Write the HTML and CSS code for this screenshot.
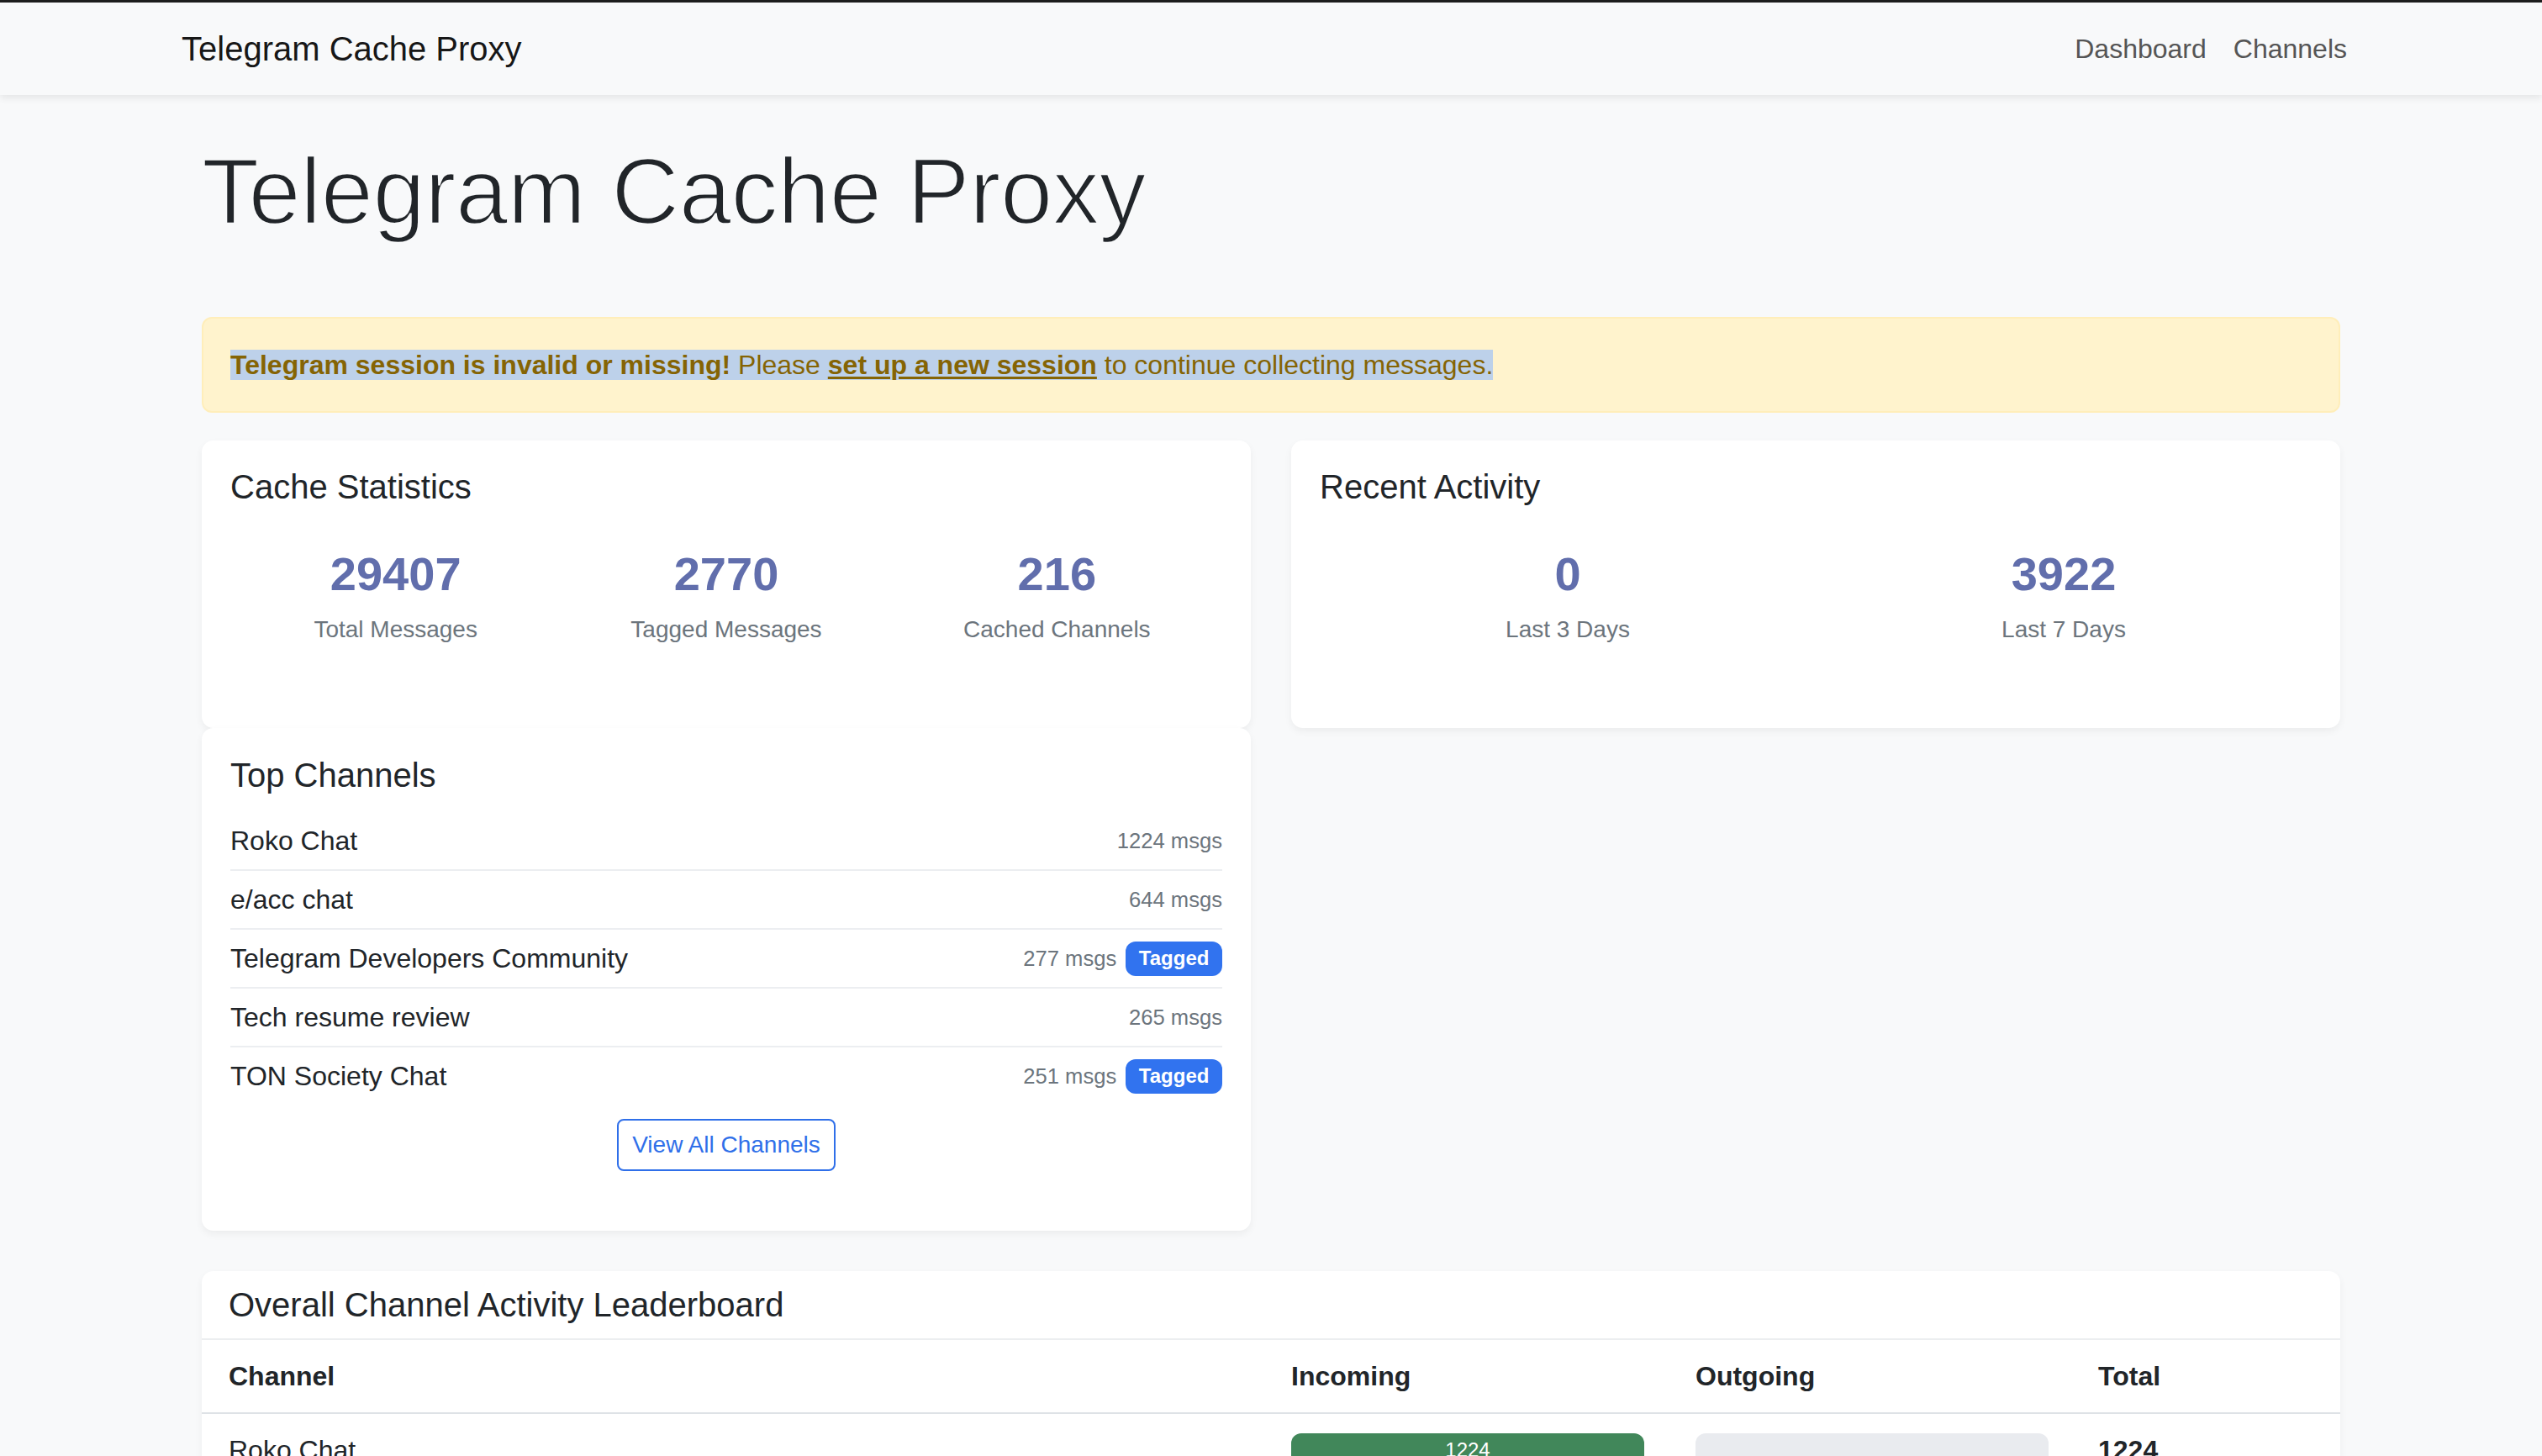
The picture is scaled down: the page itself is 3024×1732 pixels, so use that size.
FILE: index.html
```html
<!DOCTYPE html>
<html lang="en">
<head>
<meta charset="utf-8">
<title>Telegram Cache Proxy</title>
<link rel="stylesheet" href="styles.css">
</head>
<body>
<div class="topbar"></div>
<nav class="navbar">
  <div class="nav-inner">
    <a class="brand" href="#">Telegram Cache Proxy</a>
    <div class="nav-links">
      <a class="nav-link" href="#">Dashboard</a>
      <a class="nav-link" href="#">Channels</a>
    </div>
  </div>
</nav>
<main class="main">
  <h1 class="display">Telegram Cache Proxy</h1>
  <div class="alert"><span class="sel"><strong>Telegram session is invalid or missing!</strong> Please <a class="alert-link" href="#">set up a new session</a> to continue collecting messages.</span></div>

  <div class="grid">
    <section class="card">
      <h5 class="card-title">Cache Statistics</h5>
      <div class="stats stats-3">
        <div class="stat"><div class="stat-num">29407</div><div class="stat-label">Total Messages</div></div>
        <div class="stat"><div class="stat-num">2770</div><div class="stat-label">Tagged Messages</div></div>
        <div class="stat"><div class="stat-num">216</div><div class="stat-label">Cached Channels</div></div>
      </div>
    </section>
    <section class="card">
      <h5 class="card-title">Recent Activity</h5>
      <div class="stats stats-2">
        <div class="stat"><div class="stat-num">0</div><div class="stat-label">Last 3 Days</div></div>
        <div class="stat"><div class="stat-num">3922</div><div class="stat-label">Last 7 Days</div></div>
      </div>
    </section>
    <section class="card card-channels">
      <h5 class="card-title title-channels">Top Channels</h5>
      <ul class="list">
        <li class="list-item"><span>Roko Chat</span><span class="meta"><span class="msgs">1224 msgs</span></span></li>
        <li class="list-item"><span>e/acc chat</span><span class="meta"><span class="msgs">644 msgs</span></span></li>
        <li class="list-item"><span>Telegram Developers Community</span><span class="meta"><span class="msgs">277 msgs</span><span class="badge">Tagged</span></span></li>
        <li class="list-item"><span>Tech resume review</span><span class="meta"><span class="msgs">265 msgs</span></span></li>
        <li class="list-item"><span>TON Society Chat</span><span class="meta"><span class="msgs">251 msgs</span><span class="badge">Tagged</span></span></li>
      </ul>
      <div class="btn-wrap"><a class="btn-outline" href="#">View All Channels</a></div>
    </section>
  </div>

  <section class="card card-board">
    <div class="card-header"><h5 class="card-title header-title">Overall Channel Activity Leaderboard</h5></div>
    <table class="table">
      <colgroup><col class="c-channel"><col class="c-in"><col class="c-out"><col class="c-total"></colgroup>
      <thead>
        <tr><th>Channel</th><th>Incoming</th><th>Outgoing</th><th>Total</th></tr>
      </thead>
      <tbody>
        <tr><td>Roko Chat</td><td><div class="progress"><div class="bar" style="width:100%">1224</div></div></td><td><div class="progress"></div></td><td class="total">1224</td></tr>
        <tr><td>e/acc chat</td><td><div class="progress"><div class="bar" style="width:52.6%">644</div></div></td><td><div class="progress"></div></td><td class="total">644</td></tr>
        <tr><td>Telegram Developers Community</td><td><div class="progress"><div class="bar" style="width:22.6%">277</div></div></td><td><div class="progress"></div></td><td class="total">277</td></tr>
        <tr><td>Tech resume review</td><td><div class="progress"><div class="bar" style="width:21.7%">265</div></div></td><td><div class="progress"></div></td><td class="total">265</td></tr>
        <tr><td>TON Society Chat</td><td><div class="progress"><div class="bar" style="width:20.5%">251</div></div></td><td><div class="progress"></div></td><td class="total">251</td></tr>
      </tbody>
    </table>
  </section>
</main>
</body>
</html>
```
FILE: styles.css
```css
* { box-sizing: border-box; }
html, body { margin: 0; padding: 0; }
body {
  background: #f8f9fa;
  font-family: "Liberation Sans", Arial, Helvetica, sans-serif;
  font-size: 32px;
  line-height: 48px;
  color: #212529;
}
a { text-decoration: none; }

.topbar { height: 3px; background: #1e1e1e; }

.navbar {
  height: 110px;
  background: #f8f9fa;
  box-shadow: 0 4px 8px rgba(0, 0, 0, 0.075);
  position: relative;
  z-index: 1;
}
.nav-inner {
  width: 2592px;
  height: 100%;
  margin: 0 auto;
  display: flex;
  align-items: center;
  justify-content: space-between;
}
.brand {
  font-size: 40px;
  line-height: 60px;
  color: rgba(0, 0, 0, 0.92);
}
.nav-links { display: flex; }
.nav-link {
  color: #555;
  padding: 0 16px;
  font-size: 32px;
  line-height: 48px;
}

.main {
  width: 2544px;
  margin: 0 auto;
  padding-top: 48px;
}
.display {
  margin: 0 0 82px;
  font-size: 112px;
  line-height: 134px;
  font-weight: 300;
  color: #212529;
  letter-spacing: -0.5px;
  -webkit-text-stroke: 2.5px #f8f9fa;
}

.alert {
  background: #fff3cd;
  border: 2px solid #ffeeba;
  border-radius: 12px;
  color: #856404;
  padding: 31px 32px;
  margin-bottom: 33px;
}
.sel { background: #bdd1ea; }
.alert strong { font-weight: 700; }
.alert-link { color: #856404; font-weight: 700; text-decoration: underline; text-underline-offset: 3px; }

.grid {
  display: grid;
  grid-template-columns: 1248px 1248px;
  grid-template-rows: 342px auto;
  column-gap: 48px;
  margin-bottom: 48px;
}

.card {
  background: #fff;
  border-radius: 14px;
  box-shadow: 0 4px 10px rgba(0, 0, 0, 0.05);
  padding: 31px 34px;
}
.card-title {
  margin: 0;
  font-size: 40px;
  line-height: 48px;
  font-weight: 400;
  color: #212529;
}

.stats { display: grid; margin-top: 46px; text-align: center; }
.stats-3 { grid-template-columns: repeat(3, 1fr); }
.stats-2 { grid-template-columns: repeat(2, 1fr); }
.stat-num {
  font-size: 56px;
  line-height: 67px;
  font-weight: 700;
  color: #616eac;
}
.stat-label {
  margin-top: 12px;
  font-size: 28px;
  line-height: 42px;
  color: #6c757d;
}

.card-channels { padding-top: 32px; }
.title-channels { margin-bottom: 20px; }
.list { list-style: none; margin: 0; padding: 0; }
.list-item {
  display: flex;
  justify-content: space-between;
  align-items: center;
  padding: 10px 0;
  border-bottom: 2px solid #eceef1;
}
.list-item:last-child { border-bottom: none; }
.meta { display: flex; align-items: center; }
.msgs { font-size: 25.6px; color: #6c757d; }
.badge {
  margin-left: 11px;
  background: #3173ef;
  color: #fff;
  font-size: 24px;
  line-height: 24px;
  font-weight: 700;
  padding: 8px 15.6px 9px;
  border-radius: 12px;
}
.btn-wrap { text-align: center; margin: 17px 0 40px; }
.btn-outline {
  display: inline-block;
  font-size: 28px;
  line-height: 42px;
  padding: 8px 16px;
  border: 2px solid #2f6fe9;
  color: #2f6fe9;
  border-radius: 8px;
}

.card-board { padding: 0; overflow: hidden; }
.card-header {
  padding: 16px 32px;
  border-bottom: 2px solid #eceef0;
}
.table {
  width: 100%;
  border-collapse: collapse;
  table-layout: fixed;
}
.c-channel { width: 1264px; }
.c-in { width: 481px; }
.c-out { width: 479px; }
.c-total { width: 320px; }
.table th, .table td {
  padding: 19px 0 19px 32px;
  text-align: left;
  vertical-align: middle;
}
.table th {
  font-weight: 700;
  border-bottom: 2px solid #dee2e6;
}
.table td { border-bottom: 2px solid #eceef0; }
.table td.total { font-weight: 700; }
.progress {
  width: 420px;
  height: 40px;
  background: #e9ebef;
  border-radius: 12px;
  overflow: hidden;
  display: flex;
}
.bar {
  background: #41875a;
  color: #fff;
  font-size: 24px;
  line-height: 40px;
  text-align: center;
}
```
